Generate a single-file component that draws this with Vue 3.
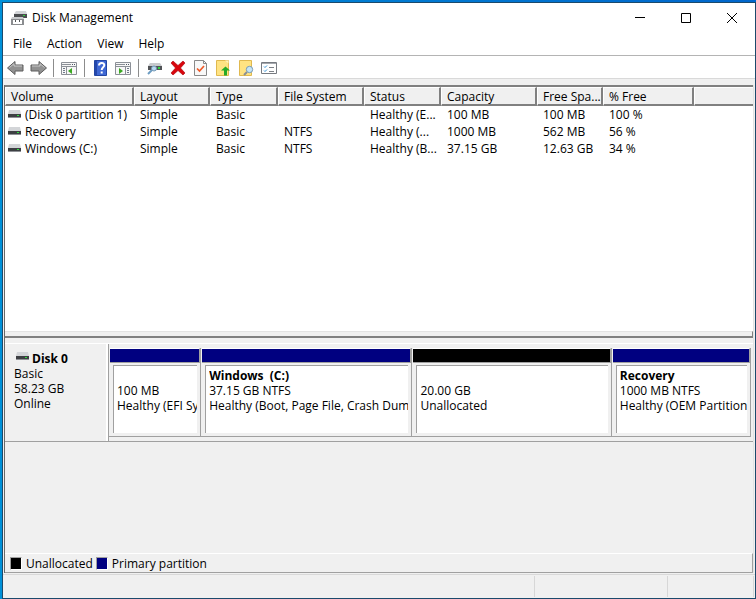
<script setup>
import { ref } from 'vue'

const menus = ['File', 'Action', 'View', 'Help']

const columns = [
  { key: 'name', label: 'Volume' },
  { key: 'layout', label: 'Layout' },
  { key: 'type', label: 'Type' },
  { key: 'fs', label: 'File System' },
  { key: 'status', label: 'Status' },
  { key: 'capacity', label: 'Capacity' },
  { key: 'free', label: 'Free Spa...' },
  { key: 'percent', label: '% Free' },
  { key: 'rest', label: '' }
]

const volumes = [
  { name: '(Disk 0 partition 1)', layout: 'Simple', type: 'Basic', fs: '', status: 'Healthy (E...', capacity: '100 MB', free: '100 MB', percent: '100 %' },
  { name: 'Recovery', layout: 'Simple', type: 'Basic', fs: 'NTFS', status: 'Healthy (...', capacity: '1000 MB', free: '562 MB', percent: '56 %' },
  { name: 'Windows (C:)', layout: 'Simple', type: 'Basic', fs: 'NTFS', status: 'Healthy (B...', capacity: '37.15 GB', free: '12.63 GB', percent: '34 %' }
]

const partitions = [
  { kind: 'primary', title: '', size: '100 MB', status: 'Healthy (EFI Sy' },
  { kind: 'primary', title: 'Windows  (C:)', size: '37.15 GB NTFS', status: 'Healthy (Boot, Page File, Crash Dump' },
  { kind: 'unallocated', title: '', size: '20.00 GB', status: 'Unallocated' },
  { kind: 'primary', title: 'Recovery', size: '1000 MB NTFS', status: 'Healthy (OEM Partition)' }
]

const legend = [
  { kind: 'unallocated', label: 'Unallocated' },
  { kind: 'primary', label: 'Primary partition' }
]

const selected = ref(null)
</script>

<template>
  <div class="desktop">
    <main class="window">
      <header class="titlebar">
        <svg class="app-icon" width="16" height="16" viewBox="0 0 16 16">
          <path d="M5 1h10l1 3H3z" fill="#d2d4d7" />
          <path d="M3 4h13v4H3z" fill="#4b4d50" />
          <path d="M12 5h2v1h-2z" fill="#2fd43a" />
          <path d="M1 7h11l1 2H0z" fill="#c9cbcd" />
          <path d="M0 9h13v6H0z" fill="#8b8d90" />
          <path d="M2 10h9v4H2z" fill="#fff" />
          <path d="M4 10h1v2H4zM8 10h1v2H8z" fill="#55575a" />
        </svg>
        <h1 class="title">Disk Management</h1>
        <div class="caption-buttons">
          <button class="caption" aria-label="Minimize">
            <svg width="12" height="12" viewBox="0 0 12 12"><path d="M1 5.5h10" stroke="#000" /></svg>
          </button>
          <button class="caption" aria-label="Maximize">
            <svg width="12" height="12" viewBox="0 0 12 12"><path d="M1.5 1.5h9v9h-9z" fill="none" stroke="#000" /></svg>
          </button>
          <button class="caption" aria-label="Close">
            <svg width="12" height="12" viewBox="0 0 12 12"><path d="M1 1l10 10M11 1L1 11" stroke="#000" /></svg>
          </button>
        </div>
      </header>

      <nav class="menubar">
        <button v-for="menu in menus" :key="menu" class="menu">{{ menu }}</button>
      </nav>

      <div class="toolbar" role="toolbar">
        <button class="tool" aria-label="Back">
          <svg width="17" height="16" viewBox="0 0 17 16">
            <path d="M.5 8L8 1.5v3.500h8v6H8v3.500z" fill="#929292" stroke="#5c5c5c" />
            <path d="M2.500 7.500L7 3.700V6h8" fill="none" stroke="#c9c9c9" />
          </svg>
        </button>
        <button class="tool" aria-label="Forward">
          <svg width="17" height="16" viewBox="0 0 17 16">
            <path d="M16.500 8L9 1.500v3.500H1v6h8v3.500z" fill="#929292" stroke="#5c5c5c" />
            <path d="M2 6h8V3.700L14.500 7.500" fill="none" stroke="#c9c9c9" />
          </svg>
        </button>
        <span class="divider"></span>
        <button class="tool" aria-label="Show/Hide Console Tree">
          <svg width="17" height="16" viewBox="0 0 17 16">
            <path d="M.5 2.500h15v12H.5z" fill="#f7f7f7" stroke="#8c9097" />
            <path d="M1 4.500h9M1 6.500h14M5.500 7v7" stroke="#8c9097" />
            <path d="M11 4.500h1M13 4.500h1" stroke="#4d5563" />
            <path d="M2 8.500h2M2 10.500h2M2 12.500h2" stroke="#6f7989" />
            <path d="M11 8v6L7 11z" fill="#3aa821" />
          </svg>
        </button>
        <span class="divider"></span>
        <button class="tool" aria-label="Help">
          <svg width="13" height="16" viewBox="0 0 13 16">
            <path d="M.5 .5h12v15H.5z" fill="#3f68d4" stroke="#2346a3" />
            <path d="M1 1h2v14H1z" fill="#2448ac" />
            <path d="M5 5.500C5 2 10.500 2.200 10.300 5.200c0 2-2.600 2-2.600 4.800" fill="none" stroke="#fff" stroke-width="2" />
            <path d="M6.700 11.500h2v2h-2z" fill="#fff" />
          </svg>
        </button>
        <button class="tool" aria-label="Show/Hide Action Pane">
          <svg width="17" height="16" viewBox="0 0 17 16">
            <path d="M.5 2.500h15v12H.5z" fill="#f7f7f7" stroke="#8c9097" />
            <path d="M1 4.500h9M1 6.500h14M10.500 7v7" stroke="#8c9097" />
            <path d="M11 4.500h1M13 4.500h1" stroke="#4d5563" />
            <path d="M12 8.500h2M12 10.500h2M12 12.500h2" stroke="#6f7989" />
            <path d="M4 8v6l4-3z" fill="#3aa821" />
          </svg>
        </button>
        <span class="divider"></span>
        <button class="tool" aria-label="Rescan Disks">
          <svg width="15" height="16" viewBox="0 0 15 16">
            <path d="M3 3h10l2 3H1z" fill="#c8cacd" />
            <path d="M1 6h14v4H1z" fill="#515357" />
            <path d="M11 7h2v2h-2z" fill="#2cd83c" />
            <path d="M5 10l-4 4" stroke="#6c9cc2" stroke-width="2" />
            <circle cx="7" cy="8.500" r="2.500" fill="#b9daf0" stroke="#7598b5" />
          </svg>
        </button>
        <button class="tool" aria-label="Delete">
          <svg width="16" height="16" viewBox="0 0 16 16">
            <path d="M1 3l2-2 5 4.500L13 1l2 2-4.500 5L15 13l-2 2-5-4.500L3 15l-2-2 4.500-5z" fill="#d9060d" stroke="#a90006" stroke-width=".6" />
          </svg>
        </button>
        <button class="tool" aria-label="Properties">
          <svg width="13" height="16" viewBox="0 0 13 16">
            <path d="M.5 .5h9l3 3v12h-12z" fill="#f8f8f8" stroke="#898989" />
            <path d="M9.500 .5v3h3" fill="none" stroke="#898989" />
            <path d="M3 8.500l2.500 2.500 4.500-5" fill="none" stroke="#ef5a28" stroke-width="1.700" />
          </svg>
        </button>
        <button class="tool" aria-label="Open">
          <svg width="15" height="16" viewBox="1 0 15 16">
            <path d="M1.500 .5h12v15h-12z" fill="#ffe382" stroke="#e0b94f" />
            <path d="M10 0.500h3.500v3z" fill="#fff2bd" />
            <path d="M10.500 6.500l4.500 4h-3v5H9v-5H6z" fill="#27ab27" />
          </svg>
        </button>
        <button class="tool" aria-label="Explore">
          <svg width="15" height="16" viewBox="1 0 15 16">
            <path d="M1.500 .5h12v15h-12z" fill="#ffe382" stroke="#e0b94f" />
            <path d="M9 12l-3 3" stroke="#8b8f94" stroke-width="2" />
            <circle cx="11.500" cy="9.500" r="3.200" fill="#c4e4f7" stroke="#7a9bb3" />
          </svg>
        </button>
        <button class="tool" aria-label="Settings">
          <svg width="17" height="16" viewBox="0 0 17 16">
            <path d="M.5 2.500h15v11H.5z" fill="#fff" stroke="#777b81" />
            <path d="M1 3.500h14" stroke="#a4a8ad" />
            <path d="M3 6.500l1 1 2-2M3 10.500l1 1 2-2" fill="none" stroke="#3191d4" />
            <path d="M8 7.500h5M8 11.500h5" stroke="#7d8187" />
          </svg>
        </button>
      </div>

      <div class="panes">
        <section class="volume-list">
          <table class="volumes">
            <colgroup>
              <col v-for="col in columns" :key="col.key" :class="'col-' + col.key" />
            </colgroup>
            <thead>
              <tr>
                <th v-for="col in columns" :key="col.key">{{ col.label }}</th>
              </tr>
            </thead>
            <tbody>
              <tr v-for="volume in volumes" :key="volume.name" @click="selected = volume.name">
                <td v-for="col in columns" :key="col.key">
                  <svg v-if="col.key === 'name'" class="drive" width="13" height="8" viewBox="0 0 13 8">
                    <path d="M1 0h11l1 4H0z" fill="#d3d5d8" />
                    <path d="M0 4h13v4H0z" fill="#8f9196" />
                    <path d="M0 4h13v3H0z" fill="#3d3f43" />
                    <path d="M9 5h2v1H9z" fill="#2ee03e" />
                  </svg>{{ volume[col.key] }}
                </td>
              </tr>
            </tbody>
          </table>
          <div class="splitter"></div>
        </section>

        <section class="graph">
          <div class="disk-row">
            <div class="disk-label">
              <h2 class="disk-name">
                <svg class="disk-icon" width="13" height="8" viewBox="0 0 13 8">
                  <path d="M1 0h11l1 4H0z" fill="#d3d5d8" />
                  <path d="M0 4h13v4H0z" fill="#8f9196" />
                  <path d="M0 4h13v3H0z" fill="#3d3f43" />
                  <path d="M9 5h2v1H9z" fill="#2ee03e" />
                </svg>
                <span>Disk 0</span>
              </h2>
              <div>Basic</div>
              <div>58.23 GB</div>
              <div>Online</div>
            </div>
            <div class="partitions">
              <div v-for="(part, i) in partitions" :key="i" class="partition">
                <div class="bar" :class="part.kind"></div>
                <div class="partition-body">
                  <div class="partition-info">
                    <div class="partition-title">{{ part.title }}</div>
                    <div>{{ part.size }}</div>
                    <div>{{ part.status }}</div>
                  </div>
                </div>
              </div>
            </div>
          </div>
          <div class="legend">
            <span v-for="item in legend" :key="item.kind" class="legend-item">
              <span class="swatch" :class="item.kind"></span>{{ item.label }}
            </span>
          </div>
        </section>
      </div>

      <footer class="statusbar">
        <span></span>
        <span></span>
        <span></span>
      </footer>
    </main>
  </div>
</template>

<style>
body {
  margin: 0;
}
</style>

<style scoped>
* {
  box-sizing: border-box;
}

.desktop {
  display: flex;
  min-height: 100vh;
  padding: 2px 0 0 2px;
  background: linear-gradient(90deg, #0091d9, #0066cc);
  font-family: 'Segoe UI', 'Open Sans', 'Noto Sans', sans-serif;
  font-size: 12px;
  line-height: 15px;
  color: #000;
}

button {
  padding: 0;
  border: 0;
  background: none;
  font: inherit;
  color: inherit;
}

.window {
  flex: 1;
  min-width: 0;
  display: flex;
  flex-direction: column;
  border: 1px solid #1b4a6c;
  background: #f0f0f0;
}

.titlebar {
  display: flex;
  align-items: center;
  height: 29px;
  padding-left: 8px;
  background: #fff;
}

.title {
  margin: 0 0 0 5px;
  font-size: 12px;
  font-weight: 400;
}

.caption-buttons {
  display: flex;
  margin-left: auto;
}

.caption {
  display: flex;
  align-items: center;
  justify-content: center;
  width: 46px;
  height: 28px;
}

.menubar {
  display: flex;
  height: 24px;
  padding: 0 2px;
  background: #fff;
  border-bottom: 1px solid #b4b4b4;
}

.menu {
  padding: 0 7px 0 8px;
}

.toolbar {
  display: flex;
  align-items: center;
  height: 23px;
  padding: 2px 1px 0;
  background: #fff;
  border-bottom: 1px solid #d9d9d9;
}

.tool {
  display: flex;
  justify-content: center;
  width: 23px;
}

.divider {
  width: 1px;
  height: 18px;
  margin: 0 4px 0 3px;
  background: #8c8c8c;
}

.panes {
  flex: 1;
  display: grid;
  grid-template-rows: 253fr 235fr;
  margin: 6px 1px 0;
  border-left: 1px solid #696969;
  border-right: 1px solid #e3e3e3;
}

.volume-list {
  display: flex;
  flex-direction: column;
  justify-content: space-between;
  background: #fff;
  border-top: 2px solid #808080;
}

.volumes {
  width: 100%;
  table-layout: fixed;
  border-collapse: separate;
  border-spacing: 0;
}

.col-name { width: 129px; }
.col-layout { width: 76px; }
.col-type { width: 68px; }
.col-fs { width: 86px; }
.col-status { width: 77px; }
.col-capacity { width: 96px; }
.col-free { width: 66px; }
.col-percent { width: 91px; }

th {
  height: 19px;
  padding: 0 5px;
  background: #f0f0f0;
  border: 1px solid #fff;
  border-right: 2px solid #808080;
  border-bottom: 2px solid #808080;
  font-weight: 400;
  text-align: left;
  white-space: nowrap;
}

th:last-child {
  border-right: 0;
}

td {
  height: 17px;
  padding: 0 0 0 6px;
  white-space: nowrap;
}

td:first-child {
  padding-left: 3px;
}

.drive {
  margin-right: 4px;
  vertical-align: 1px;
}

.splitter {
  height: 7px;
  background: #f0f0f0;
  border-top: 1px solid #e3e3e3;
  border-right: 1px solid #808080;
  border-bottom: 2px solid #808080;
}

.graph {
  display: flex;
  flex-direction: column;
  justify-content: space-between;
  padding-top: 5px;
}

.disk-row {
  display: flex;
  height: 99px;
  border-top: 1px solid #fff;
  border-bottom: 1px solid #a0a0a0;
}

.disk-label {
  width: 104px;
  padding: 7px 9px;
  border-right: 1px solid #a0a0a0;
  box-shadow: inset -2px 0 #fff;
}

.disk-name {
  display: flex;
  align-items: flex-start;
  gap: 3px;
  margin: 0;
  padding-left: 2px;
  font-size: 12px;
}

.disk-icon {
  margin-top: 1px;
}

.partitions {
  flex: 1;
  min-width: 0;
  display: grid;
  grid-template-columns: 92fr 211fr 199fr 139fr;
  margin: 4px 2px 4px 0;
  border-bottom: 1px solid #a0a0a0;
}

.partition {
  min-width: 0;
  display: flex;
  flex-direction: column;
  border-left: 1px solid #f0f0f0;
  border-right: 1px solid #a0a0a0;
}

.bar {
  height: 15px;
  border-right: 1px solid #a0a0a0;
  border-top: 1px solid #fff;
  border-bottom: 1px solid #a0a0a0;
}

.primary {
  background-color: #000080;
}

.unallocated {
  background-color: #000;
}

.partition-body {
  flex: 1;
  min-width: 0;
  padding: 2px 3px 3px 3px;
}

.partition-info {
  height: 100%;
  padding: 2px 0 0 3px;
  border-top: 1px solid #a0a0a0;
  border-left: 1px solid #a0a0a0;
  background: #fff;
}

.partition-info div {
  overflow: hidden;
  white-space: pre;
}

.partition-title {
  height: 15px;
  font-weight: 700;
}

.legend {
  display: flex;
  align-items: center;
  gap: 3px;
  height: 20px;
  padding-left: 5px;
  border-top: 1px solid #fff;
  border-right: 1px solid #a0a0a0;
  border-bottom: 1px solid #a0a0a0;
}

.legend-item {
  display: flex;
  align-items: center;
  gap: 4px;
}

.swatch {
  width: 12px;
  height: 13px;
  border: 1px solid #a0a0a0;
  border-right-color: #fff;
  border-bottom-color: #fff;
}

.statusbar {
  display: grid;
  grid-template-columns: 1fr 133px 86px;
  height: 24px;
  margin-top: 1px;
  padding: 1px 1px;
  border-top: 1px solid #d9d9d9;
}

.statusbar span {
  border-right: 1px solid #d7d7d7;
}
</style>
